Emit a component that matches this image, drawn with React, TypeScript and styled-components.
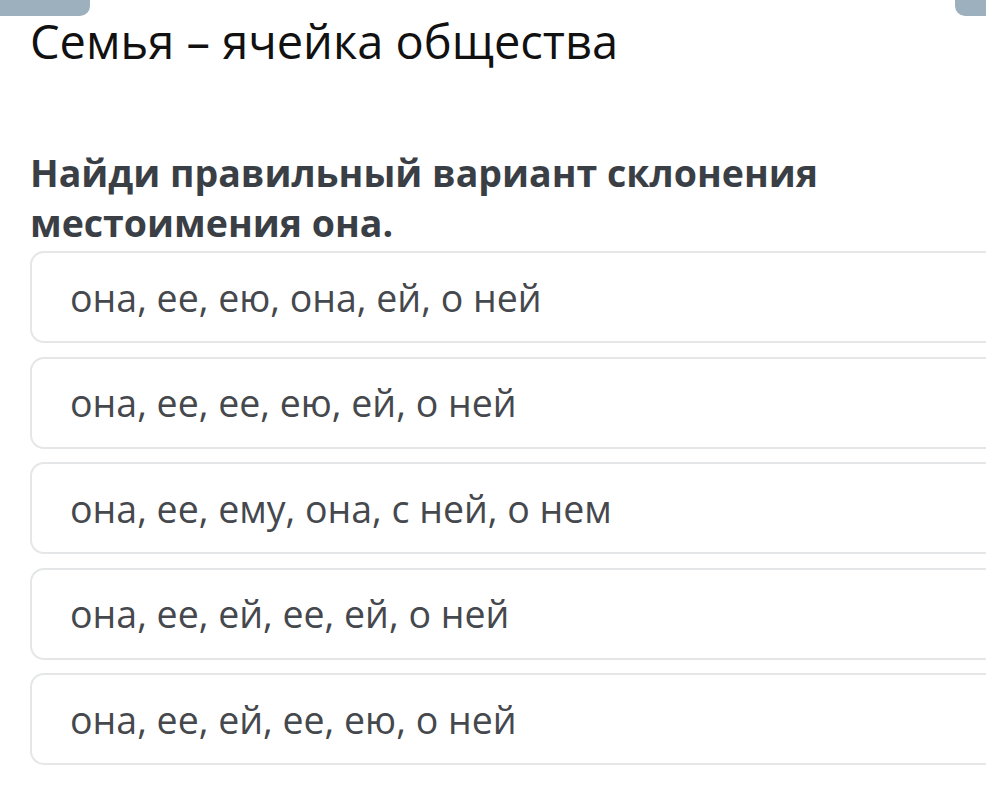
import styled, { createGlobalStyle } from "styled-components";

const GlobalStyle = createGlobalStyle`
  html, body {
    margin: 0;
    padding: 0;
    background: #ffffff;
    overflow: hidden;
  }
  body {
    font-family: "Open Sans", "Noto Sans", sans-serif;
  }
`;

const Page = styled.div`
  width: 986px;
  height: 785px;
  overflow: hidden;
  display: flex;
  flex-direction: column;
`;

const TopBar = styled.div`
  display: flex;
  justify-content: space-between;
  height: 16px;
`;

const Tab = styled.div<{ $side: "left" | "right"; $w: number }>`
  width: ${(p) => p.$w}px;
  height: 16px;
  background: #9db0bd;
  border-bottom-${(p) => (p.$side === "left" ? "right" : "left")}-radius: 10px;
`;

const Content = styled.div`
  padding-left: 30px;
  margin-right: -24px;
  display: flex;
  flex-direction: column;
`;

const Title = styled.h1`
  margin: -3px 0 0;
  font-size: 47px;
  font-weight: 400;
  line-height: 56px;
  color: #111111;
`;

const Question = styled.h2`
  margin: 79px 0 0;
  font-size: 37.5px;
  font-weight: 700;
  line-height: 50px;
  color: #3a3e45;
`;

const Options = styled.div`
  display: flex;
  flex-direction: column;
  gap: 13.5px;
  margin-top: 3px;
`;

const Option = styled.div`
  height: 92px;
  box-sizing: border-box;
  border: 2px solid #e4e6e8;
  border-radius: 14px;
  display: flex;
  align-items: center;
  padding-left: 38px;
  font-size: 37.5px;
  color: #45484d;
`;

const answers = [
  "она, ее, ею, она, ей, о ней",
  "она, ее, ее, ею, ей, о ней",
  "она, ее, ему, она, с ней, о нем",
  "она, ее, ей, ее, ей, о ней",
  "она, ее, ей, ее, ею, о ней",
];

export default function App() {
  return (
    <Page>
      <GlobalStyle />
      <TopBar>
        <Tab $side="left" $w={90} />
        <Tab $side="right" $w={31} />
      </TopBar>
      <Content>
        <Title>Семья – ячейка общества</Title>
        <Question>Найди правильный вариант склонения местоимения она.</Question>
        <Options>
          {answers.map((a) => (
            <Option key={a}>{a}</Option>
          ))}
        </Options>
      </Content>
    </Page>
  );
}
